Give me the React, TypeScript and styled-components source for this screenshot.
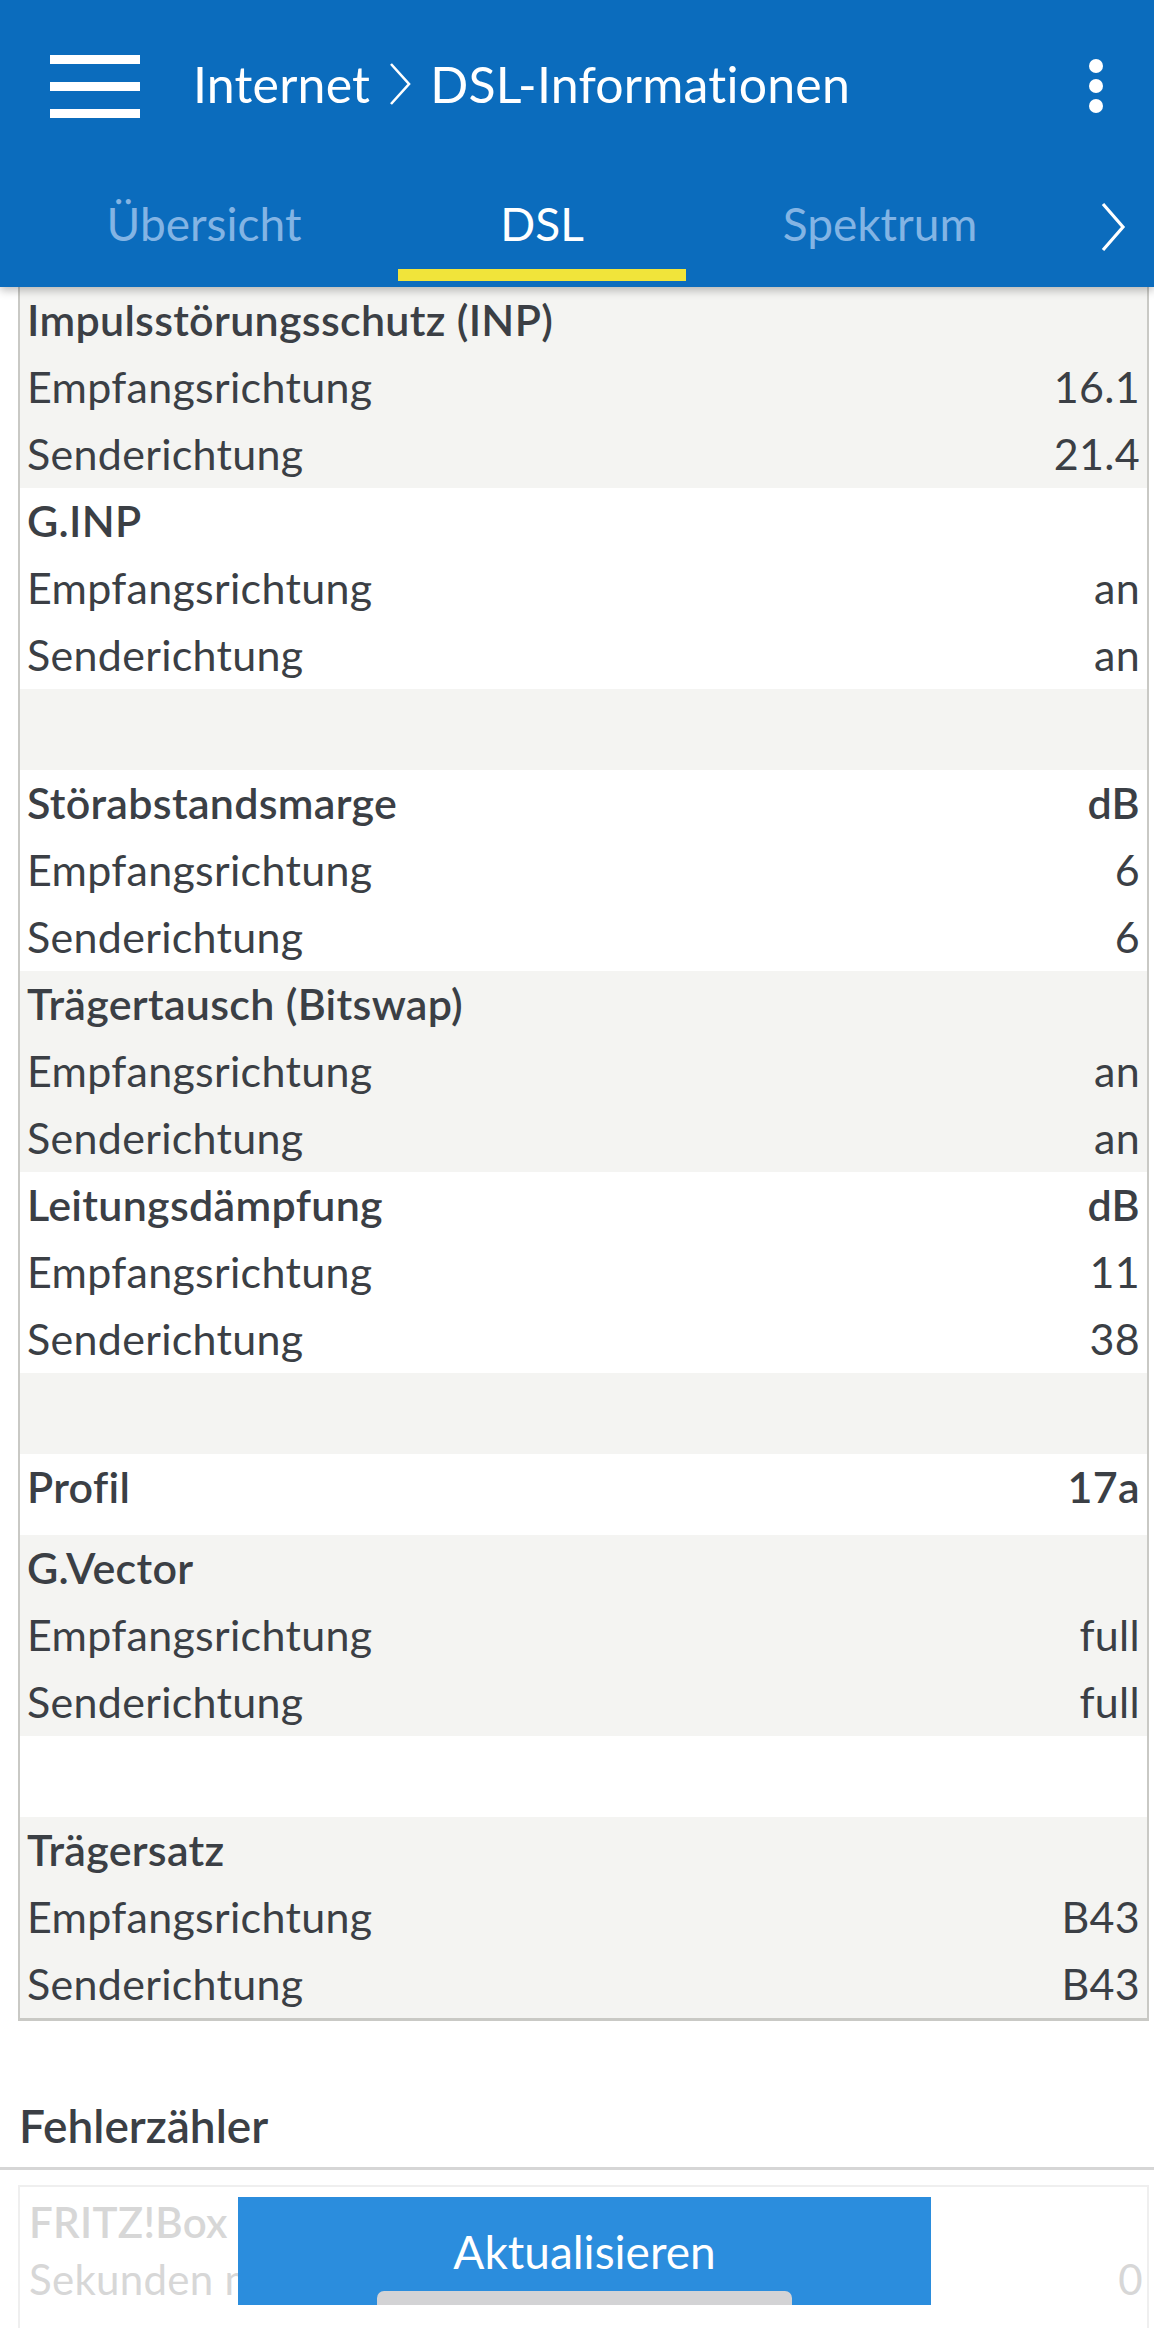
import React from "react";
import styled, { createGlobalStyle } from "styled-components";

type Row = { label: string; value?: string };
type Group = { title?: string; unit?: string; rows: Row[]; shade: boolean };

const both = (a: string, b: string): Row[] => [
  { label: "Empfangsrichtung", value: a },
  { label: "Senderichtung", value: b },
];

const groups: Group[] = [
  { title: "Impulsstörungsschutz (INP)", rows: both("16.1", "21.4"), shade: true },
  { title: "G.INP", rows: both("an", "an"), shade: false },
  { rows: [], shade: true },
  { title: "Störabstandsmarge", unit: "dB", rows: both("6", "6"), shade: false },
  { title: "Trägertausch (Bitswap)", rows: both("an", "an"), shade: true },
  { title: "Leitungsdämpfung", unit: "dB", rows: both("11", "38"), shade: false },
  { rows: [], shade: true },
  { title: "Profil", unit: "17a", rows: [], shade: false },
  { title: "G.Vector", rows: both("full", "full"), shade: true },
  { rows: [], shade: false },
  { title: "Trägersatz", rows: both("B43", "B43"), shade: true },
];

export default function App() {
  return (
    <>
      <GlobalStyle />
      <Page>
        <Header>
          <TopBar>
            <MenuButton>
              <MenuBar />
              <MenuBar />
              <MenuBar />
            </MenuButton>
            <Title>
              <span>Internet</span>
              <CrumbIcon viewBox="0 0 22 44" width="22" height="44">
                <polyline points="2,2 20,22 2,42" />
              </CrumbIcon>
              <span>DSL-Informationen</span>
            </Title>
            <MoreButton>
              <Dot />
              <Dot />
              <Dot />
            </MoreButton>
          </TopBar>
          <TabRow>
            <Tab>
              <TabLabel>Übersicht</TabLabel>
              <TabIndicator />
            </Tab>
            <Tab>
              <TabLabel $active>DSL</TabLabel>
              <TabIndicator $active />
            </Tab>
            <Tab>
              <TabLabel>Spektrum</TabLabel>
              <TabIndicator />
            </Tab>
            <NextIcon viewBox="0 0 26 50" width="26" height="50">
              <polyline points="3,2 23,25 3,48" />
            </NextIcon>
          </TabRow>
        </Header>

        <InfoTable>
          {groups.map((g, i) => (
            <GroupBox key={i} $shade={g.shade} $single={g.rows.length === 0}>
              {g.title && (
                <RowLine>
                  <Label $bold>{g.title}</Label>
                  {g.unit && <Label $bold>{g.unit}</Label>}
                </RowLine>
              )}
              {g.rows.map((r) => (
                <RowLine key={r.label}>
                  <Label>{r.label}</Label>
                  <Label>{r.value}</Label>
                </RowLine>
              ))}
            </GroupBox>
          ))}
        </InfoTable>

        <SectionTitle>Fehlerzähler</SectionTitle>
        <Divider />

        <CounterTable>
          <CounterRow>
            <FadedText $bold>FRITZ!Box</FadedText>
          </CounterRow>
          <CounterRow>
            <FadedText>Sekunden mit Fehlern (ES)</FadedText>
            <FadedText>0</FadedText>
          </CounterRow>
        </CounterTable>

        <RefreshButton>Aktualisieren</RefreshButton>
        <GestureBar />
      </Page>
    </>
  );
}

const GlobalStyle = createGlobalStyle`
  html, body {
    margin: 0;
    padding: 0;
    background: #ffffff;
  }
  * {
    box-sizing: border-box;
  }
`;

const Page = styled.div`
  position: relative;
  width: 1154px;
  height: 2328px;
  overflow: hidden;
  background: #ffffff;
  font-family: Lato, "Open Sans", sans-serif;
  font-variant-ligatures: none;
  color: #3b3f45;
`;

/* ── header ── */
const Header = styled.header`
  position: relative;
  z-index: 2;
  background: #0b6cbd;
  box-shadow: 0 3px 9px rgba(0, 0, 0, 0.28);
`;

const TopBar = styled.div`
  display: flex;
  align-items: center;
  height: 172px;
  padding: 0 38px 0 50px;
`;

const MenuButton = styled.div`
  display: flex;
  flex-direction: column;
  gap: 18px;
  width: 90px;
`;

const MenuBar = styled.span`
  display: block;
  height: 9px;
  background: #ffffff;
`;

const Title = styled.h1`
  flex: 1;
  display: flex;
  align-items: center;
  gap: 19px;
  margin: 0 0 4px 53px;
  font-size: 50px;
  font-weight: 400;
  letter-spacing: 0.2px;
  line-height: 168px;
  color: #ffffff;
  white-space: nowrap;
`;

const CrumbIcon = styled.svg`
  fill: none;
  stroke: #ffffff;
  stroke-width: 2.6;
  flex-shrink: 0;
`;

const MoreButton = styled.div`
  display: flex;
  flex-direction: column;
  gap: 6px;
  width: 40px;
  align-items: center;
`;

const Dot = styled.span`
  width: 14px;
  height: 14px;
  border-radius: 50%;
  background: #ffffff;
`;

const TabRow = styled.nav`
  display: flex;
  align-items: stretch;
  height: 115px;
  padding-left: 35px;
`;

const Tab = styled.div`
  width: 338px;
  display: flex;
  flex-direction: column;
  align-items: center;
  padding-bottom: 6px;
`;

const TabLabel = styled.span<{ $active?: boolean }>`
  flex: 1;
  padding-top: 7px;
  font-size: 46px;
  line-height: 89px;
  color: ${({ $active }) => ($active ? "#ffffff" : "#83b4e4")};
`;

const TabIndicator = styled.span<{ $active?: boolean }>`
  width: 288px;
  height: 12px;
  background: ${({ $active }) => ($active ? "#f1e43a" : "transparent")};
`;

const NextIcon = styled.svg`
  align-self: center;
  margin: 0 28px 6px auto;
  fill: none;
  stroke: #ffffff;
  stroke-width: 3.2;
`;

/* ── dsl table ── */
const InfoTable = styled.section`
  margin: 0 5px 0 18px;
  border: 2px solid #c9c9c5;
  border-top: none;
  border-bottom-width: 3px;
`;

const GroupBox = styled.div<{ $shade: boolean; $single: boolean }>`
  background: ${({ $shade }) => ($shade ? "#f4f4f2" : "#ffffff")};
  min-height: ${({ $single }) => ($single ? "81px" : "0")};
  padding-bottom: ${({ $single }) => ($single ? "14px" : "0")};
`;

const RowLine = styled.div`
  display: flex;
  justify-content: space-between;
  align-items: center;
  height: 67px;
  padding: 0 7px 2px;
`;

const Label = styled.span<{ $bold?: boolean }>`
  font-size: 43px;
  line-height: 64px;
  letter-spacing: 0.3px;
  font-weight: ${({ $bold }) => ($bold ? 600 : 400)};
  white-space: nowrap;
`;

/* ── error counter ── */
const SectionTitle = styled.h2`
  margin: 78px 0 0 19px;
  font-size: 46px;
  line-height: 54px;
  font-weight: 600;
  color: #3b3f45;
`;

const Divider = styled.hr`
  margin: 14px 0 0;
  height: 3px;
  border: none;
  background: #d6d6d6;
`;

const CounterTable = styled.section`
  margin: 15px 5px 0 18px;
  padding-top: 7px;
  border: 2px solid #efefef;
  height: 150px;
`;

const CounterRow = styled.div`
  display: flex;
  justify-content: space-between;
  height: 57px;
  padding: 0 4px 0 9px;
`;

const FadedText = styled.span<{ $bold?: boolean }>`
  font-size: 42px;
  line-height: 57px;
  letter-spacing: 0.3px;
  font-weight: ${({ $bold }) => ($bold ? 600 : 400)};
  color: #d7d7d7;
`;

const RefreshButton = styled.button`
  position: absolute;
  left: 238px;
  top: 2197px;
  width: 693px;
  height: 108px;
  border: none;
  background: #2b8ddd;
  color: #ffffff;
  font-family: Lato, "Open Sans", sans-serif;
  font-size: 46px;
  padding: 0;
`;

const GestureBar = styled.span`
  position: absolute;
  left: 377px;
  top: 2291px;
  width: 415px;
  height: 14px;
  border-radius: 7px 7px 0 0;
  background: #d3d3d5;
`;
